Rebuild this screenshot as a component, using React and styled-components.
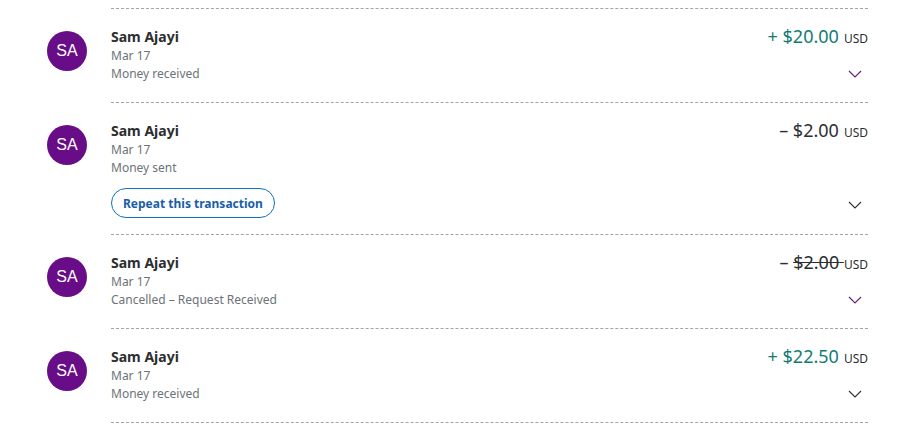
import React from 'react'
import styled, { createGlobalStyle } from 'styled-components'

const GlobalStyle = createGlobalStyle`
  body {
    margin: 0;
    background: #ffffff;
    font-family: "Noto Sans", "Open Sans", sans-serif;
    color: #2c2e2f;
  }
`

const List = styled.div`
  padding: 8px 39px 0 47px;
`

const Row = styled.div`
  display: flex;
  align-items: stretch;
`

const Avatar = styled.div`
  width: 40px;
  height: 40px;
  border-radius: 50%;
  background: #680d87;
  color: #ffffff;
  font-family: "Liberation Sans", Arial, sans-serif;
  font-size: 16px;
  display: flex;
  align-items: center;
  justify-content: center;
  margin-top: 23px;
  margin-right: 24px;
  flex-shrink: 0;
`

const Body = styled.div`
  flex: 1;
  display: flex;
  justify-content: space-between;
  border-top: 1px dashed #a4a4a4;
  padding: 18px 0 ${(p) => (p.$tall ? '16px' : '19px')};
`

const Info = styled.div`
  display: flex;
  flex-direction: column;
`

const Name = styled.div`
  font-size: 14px;
  font-weight: 700;
  line-height: 20px;
  color: #2c2e2f;
`

const Meta = styled.div`
  font-size: 12px;
  line-height: 18px;
  color: #6c7378;
  &:first-of-type {
    margin-top: 1px;
  }
`

const RepeatButton = styled.button`
  align-self: flex-start;
  margin-top: 11px;
  height: 30px;
  padding: 0 11px;
  border: 1px solid #1170c0;
  border-radius: 15px;
  background: #ffffff;
  color: #1a5ea8;
  font-family: "Noto Sans", sans-serif;
  font-size: 12px;
  font-weight: 700;
  cursor: pointer;
`

const Side = styled.div`
  display: flex;
  flex-direction: column;
  justify-content: space-between;
  align-items: flex-end;
`

const Amount = styled.div`
  display: flex;
  align-items: baseline;
  color: ${(p) => (p.$credit ? '#137c71' : '#2c2e2f')};
  font-size: 18px;
  line-height: 18px;
  white-space: pre;
`

const Struck = styled.span`
  text-decoration: line-through;
  text-decoration-thickness: 1px;
`

const Currency = styled.span`
  font-size: 12px;
  color: #2c2e2f;
  margin-left: ${(p) => (p.$tight ? '0' : '5px')};
`

const Chevron = styled.svg`
  width: 14px;
  height: 8px;
  margin-right: 6px;
  margin-bottom: ${(p) => (p.$tall ? '9px' : '5px')};
`

const Arrow = ({ color, tall }) => (
  <Chevron viewBox="0 0 14 8" $tall={tall}>
    <path d="M1 1l6 6 6-6" fill="none" stroke={color} strokeWidth="1.1" />
  </Chevron>
)

const rows = [
  { status: 'Money received', sign: '+', value: '$20.00', credit: true, chev: '#5f2172' },
  { status: 'Money sent', sign: '–', value: '$2.00', repeat: true, chev: '#2c2e2f' },
  { status: 'Cancelled – Request Received', sign: '–', value: '$2.00', cancelled: true, chev: '#5f2172' },
  { status: 'Money received', sign: '+', value: '$22.50', credit: true, chev: '#2c2e2f' },
]

const BottomRule = styled.div`
  margin-left: 64px;
  border-top: 1px dashed #a4a4a4;
`

export default function App() {
  return (
    <>
      <GlobalStyle />
      <List>
        {rows.map((r, i) => (
          <Row key={i}>
            <Avatar>SA</Avatar>
            <Body $tall={r.repeat}>
              <Info>
                <Name>Sam Ajayi</Name>
                <Meta>Mar 17</Meta>
                <Meta>{r.status}</Meta>
                {r.repeat && <RepeatButton>Repeat this transaction</RepeatButton>}
              </Info>
              <Side>
                <Amount $credit={r.credit}>
                  {r.cancelled ? (
                    <>
                      <span>{r.sign} </span>
                      <Struck>{r.value} </Struck>
                      <Currency $tight>USD</Currency>
                    </>
                  ) : (
                    <>
                      <span>
                        {r.sign} {r.value}
                      </span>
                      <Currency>USD</Currency>
                    </>
                  )}
                </Amount>
                <Arrow color={r.chev} tall={r.repeat} />
              </Side>
            </Body>
          </Row>
        ))}
        <BottomRule />
      </List>
    </>
  )
}
